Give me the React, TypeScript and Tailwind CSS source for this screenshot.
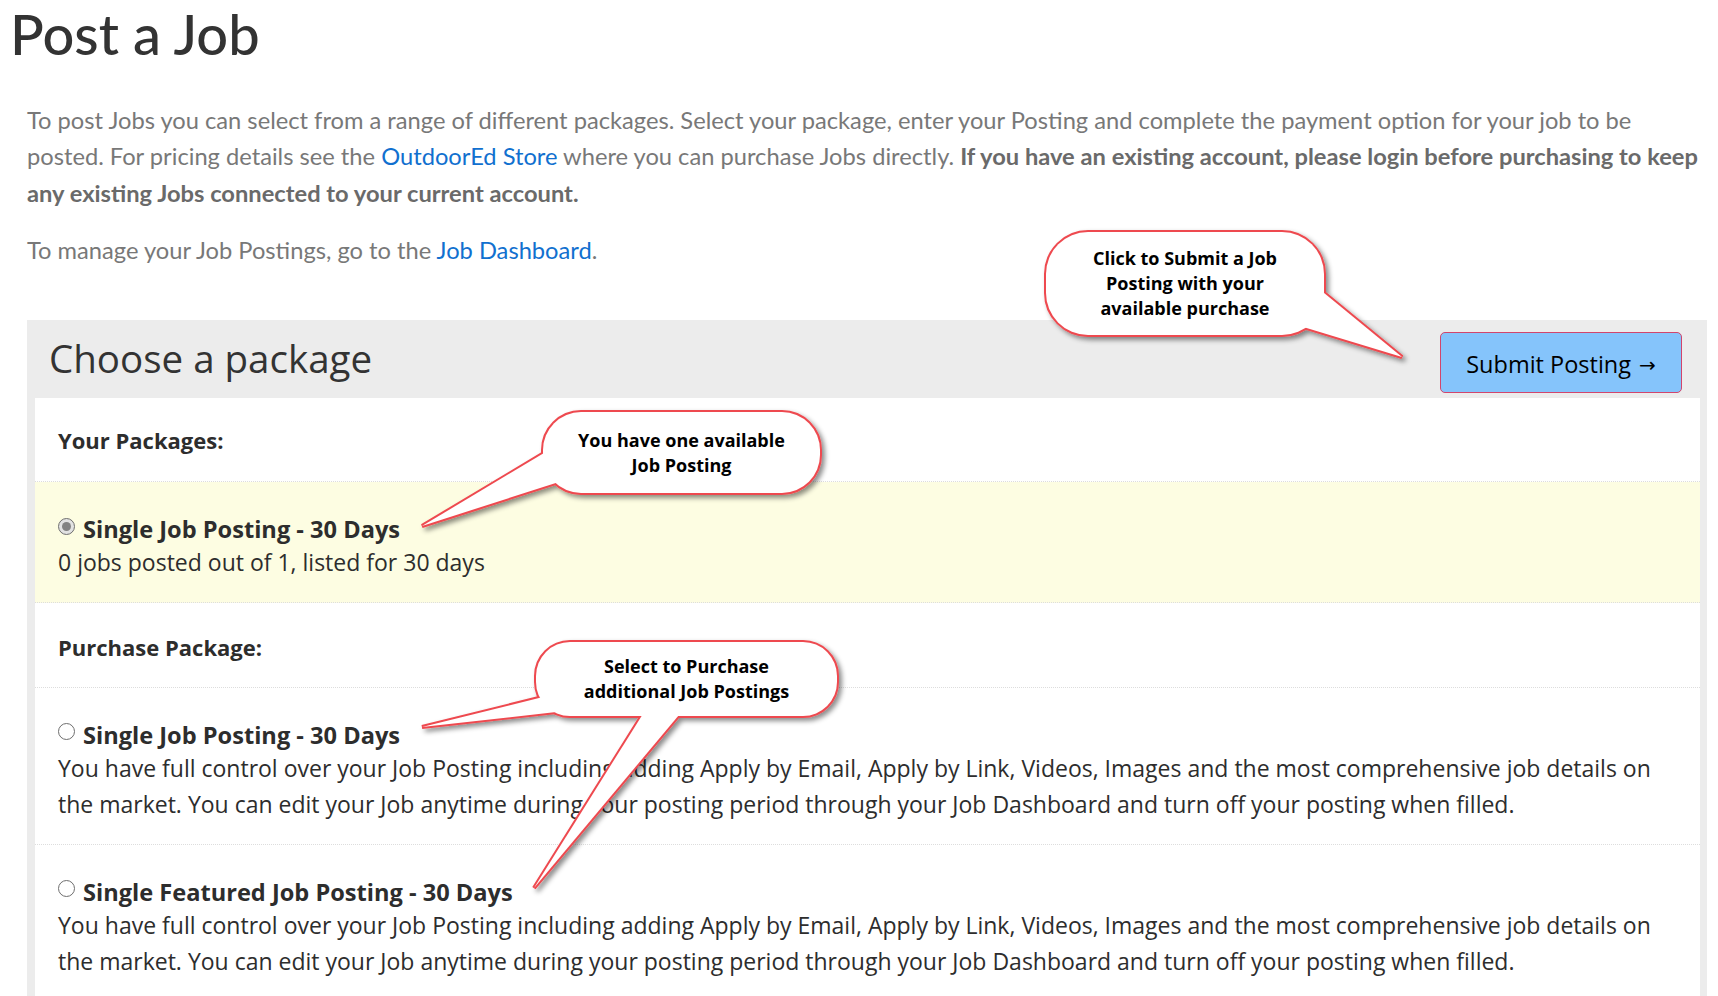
import React from "react";

const sans = "font-['Open_Sans',sans-serif]";
const lato = "font-['Lato',sans-serif]";

function Radio({ checked }: { checked?: boolean }) {
  if (checked) {
    return (
      <span className="mt-[4px] flex h-[17px] w-[17px] shrink-0 items-center justify-center rounded-full border border-[#6f6f6f] bg-[#e2e2e2]">
        <span className="h-[9px] w-[9px] rounded-full bg-[#828282]" />
      </span>
    );
  }
  return (
    <span className="mt-[3px] h-[17px] w-[17px] shrink-0 rounded-full border border-[#6e6e6e] bg-white" />
  );
}

type Callout = {
  x: number;
  y: number;
  w: number;
  h: number;
  rx: number;
  tails: string[];
  lines: string[];
};

const callouts: Callout[] = [
  {
    x: 1046,
    y: 232,
    w: 278,
    h: 103,
    rx: 42,
    tails: ["1318,288 1402,357 1300,326"],
    lines: ["Click to Submit a Job", "Posting with your", "available purchase"],
  },
  {
    x: 543,
    y: 412,
    w: 277,
    h: 81,
    rx: 38,
    tails: ["549,450 422,526 562,481"],
    lines: ["You have one available", "Job Posting"],
  },
  {
    x: 536,
    y: 642,
    w: 301,
    h: 74,
    rx: 34,
    tails: ["547,696 422,727 565,711", "646,709 534,888 684,709"],
    lines: ["Select to Purchase", "additional Job Postings"],
  },
];

function Callouts() {
  return (
    <>
      <svg
        className="pointer-events-none absolute left-0 top-0"
        width="1718"
        height="996"
        viewBox="0 0 1718 996"
      >
        <defs>
          <filter id="sh" x="-20%" y="-20%" width="140%" height="150%">
            <feDropShadow dx="3" dy="3" stdDeviation="2.5" floodColor="#000" floodOpacity="0.45" />
          </filter>
        </defs>
        {callouts.map((c, i) => (
          <g key={i}>
            <g filter="url(#sh)">
              <rect x={c.x} y={c.y} width={c.w} height={c.h} rx={c.rx} fill="#ee4a4f" stroke="#ee4a4f" strokeWidth="4" />
              {c.tails.map((t, j) => (
                <polygon key={j} points={t} fill="#ee4a4f" stroke="#ee4a4f" strokeWidth="4" />
              ))}
            </g>
            <rect x={c.x} y={c.y} width={c.w} height={c.h} rx={c.rx} fill="#ffffff" />
            {c.tails.map((t, j) => (
              <polygon key={j} points={t} fill="#ffffff" />
            ))}
          </g>
        ))}
      </svg>
      {callouts.map((c, i) => (
        <div
          key={i}
          className={`absolute flex items-center justify-center text-center text-[18px] font-bold leading-[25px] text-black ${sans}`}
          style={{ left: c.x, top: c.y, width: c.w, height: c.h }}
        >
          <div>
            {c.lines.map((l, j) => (
              <div key={j} className="whitespace-nowrap">
                {l}
              </div>
            ))}
          </div>
        </div>
      ))}
    </>
  );
}

const desc1 =
  "You have full control over your Job Posting including adding Apply by Email, Apply by Link, Videos, Images and the most comprehensive job details on";
const desc2 =
  "the market. You can edit your Job anytime during your posting period through your Job Dashboard and turn off your posting when filled.";

function PackageRow({ title, yellow, checked, lines }: { title: string; yellow?: boolean; checked?: boolean; lines: string[] }) {
  return (
    <div
      className={`border-b border-dotted border-[#dddddd] px-[23px] pt-[32px] pb-[22px] ${yellow ? "bg-[#fdfde2]" : "bg-white"}`}
    >
      <div className="flex h-[30px] items-start">
        <Radio checked={checked} />
        <span className="ml-[8px] whitespace-nowrap text-[23.6px] font-bold leading-[30px] text-[#2d2d2d]">{title}</span>
      </div>
      <div className="text-[23px] leading-[36px] text-[#2d2d2d]">
        {lines.map((l, i) => (
          <div key={i} className="whitespace-nowrap">
            {l}
          </div>
        ))}
      </div>
    </div>
  );
}

export default function App() {
  return (
    <div className="relative h-[996px] w-[1718px] overflow-hidden bg-white">
      <div className="pl-[10px]">
        <h1 className={`${lato} text-[56px] font-medium leading-[1.2] text-[#333333]`}>Post a Job</h1>
      </div>
      <div className="ml-[27px] w-[1680px]">
        <p className={`${lato} mt-[34.5px] whitespace-nowrap text-[23.7px] leading-[36.5px] text-[#787878]`}>
          To post Jobs you can select from a range of different packages. Select your package, enter your Posting and complete the payment option for your job to be
          <br />
          posted. For pricing details see the <a className="text-[#1170cf]">OutdoorEd Store</a> where you can purchase Jobs directly.{" "}
          <b className="font-bold text-[#6a6a6a]">If you have an existing account, please login before purchasing to keep</b>
          <br />
          <b className="font-bold text-[#6a6a6a]">any existing Jobs connected to your current account.</b>
        </p>
        <p className={`${lato} mt-[20.5px] whitespace-nowrap text-[23.7px] leading-[36.5px] text-[#787878]`}>
          To manage your Job Postings, go to the <a className="text-[#1170cf]">Job Dashboard</a>.
        </p>

        <section className={`${sans} mt-[51.5px] bg-[#ececec] pl-[8px] pr-[7px]`}>
          <div className="flex h-[78px] items-start justify-between">
            <h2 className="pl-[14px] pt-[15px] text-[38.5px] font-normal leading-[1.2] text-[#333333]">Choose a package</h2>
            <button className="mr-[18px] mt-[12px] flex h-[61px] w-[242px] items-center justify-center rounded-[5px] border border-[#d2456c] bg-[#85c4fb] pt-[5px] text-[23.5px] text-black">
              <span>Submit Posting</span>
              <span className="ml-[8px] font-['DejaVu_Sans',sans-serif] text-[20px]">→</span>
            </button>
          </div>
          <div className="bg-white">
            <div className="border-b border-dotted border-[#dddddd] px-[23px] pt-[27px] pb-[26px]">
              <div className="text-[22px] font-bold leading-[30px] text-[#2d2d2d]">Your Packages:</div>
            </div>
            <PackageRow
              yellow
              checked
              title="Single Job Posting - 30 Days"
              lines={["0 jobs posted out of 1, listed for 30 days"]}
            />
            <div className="border-b border-dotted border-[#dddddd] px-[23px] pt-[29.5px] pb-[24.5px]">
              <div className="text-[22px] font-bold leading-[30px] text-[#2d2d2d]">Purchase Package:</div>
            </div>
            <PackageRow title="Single Job Posting - 30 Days" lines={[desc1, desc2]} />
            <PackageRow title="Single Featured Job Posting - 30 Days" lines={[desc1, desc2]} />
          </div>
        </section>
      </div>
      <Callouts />
    </div>
  );
}
